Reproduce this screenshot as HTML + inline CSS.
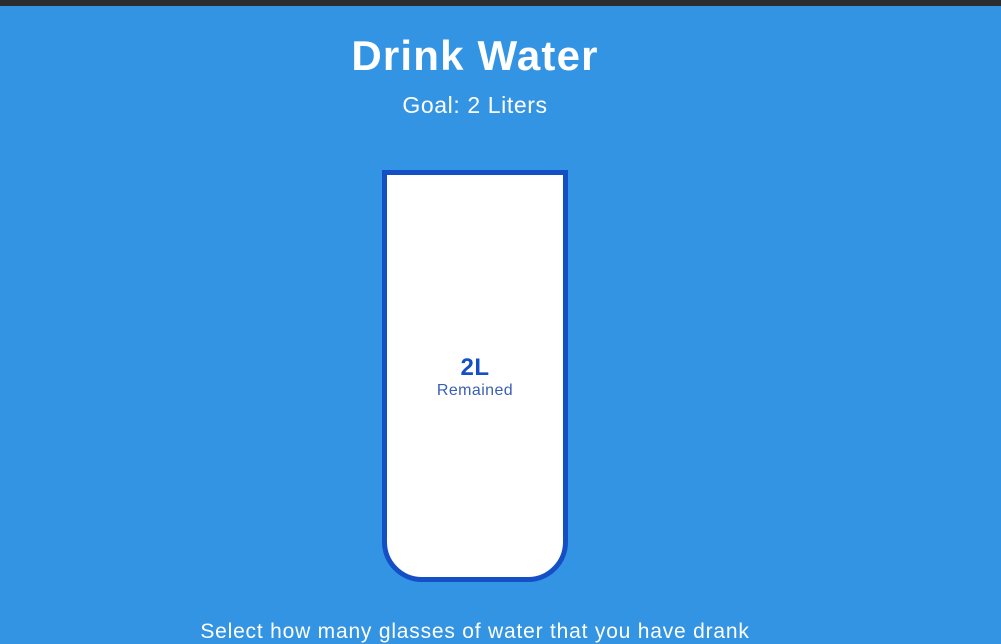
<!DOCTYPE html>
<html><head><style>
body{margin:0;width:1001px;height:641px;overflow:hidden;background:#3494e4;font-family:"Liberation Sans",sans-serif;color:#fff;position:relative}
.bar{position:absolute;top:0;left:0;width:1001px;height:6px;background:#2b2d31}
.t{position:absolute;left:0;width:950px;text-align:center}
.cup{position:absolute;left:382px;top:170px;width:176px;height:402px;border:5px solid #144fc6;border-radius:0 0 40px 40px;background:#fff;color:#144fc6;text-align:center}
</style></head><body>
<div class="bar"></div>
<div class="t" style="top:32px;font-size:42px;font-weight:bold;letter-spacing:1.2px">Drink Water</div>
<div class="t" style="top:92px;font-size:23px;letter-spacing:0.6px">Goal: 2 Liters</div>
<div class="cup">
<div style="position:absolute;top:179px;width:100%;font-size:24px;font-weight:bold;letter-spacing:0.5px">2L</div>
<div style="position:absolute;top:207px;width:100%;font-size:16px;letter-spacing:0.4px;color:#3a5fb8">Remained</div>
</div>
<div class="t" style="top:620px;font-size:21px;letter-spacing:0.8px">Select how many glasses of water that you have drank</div>
</body></html>
